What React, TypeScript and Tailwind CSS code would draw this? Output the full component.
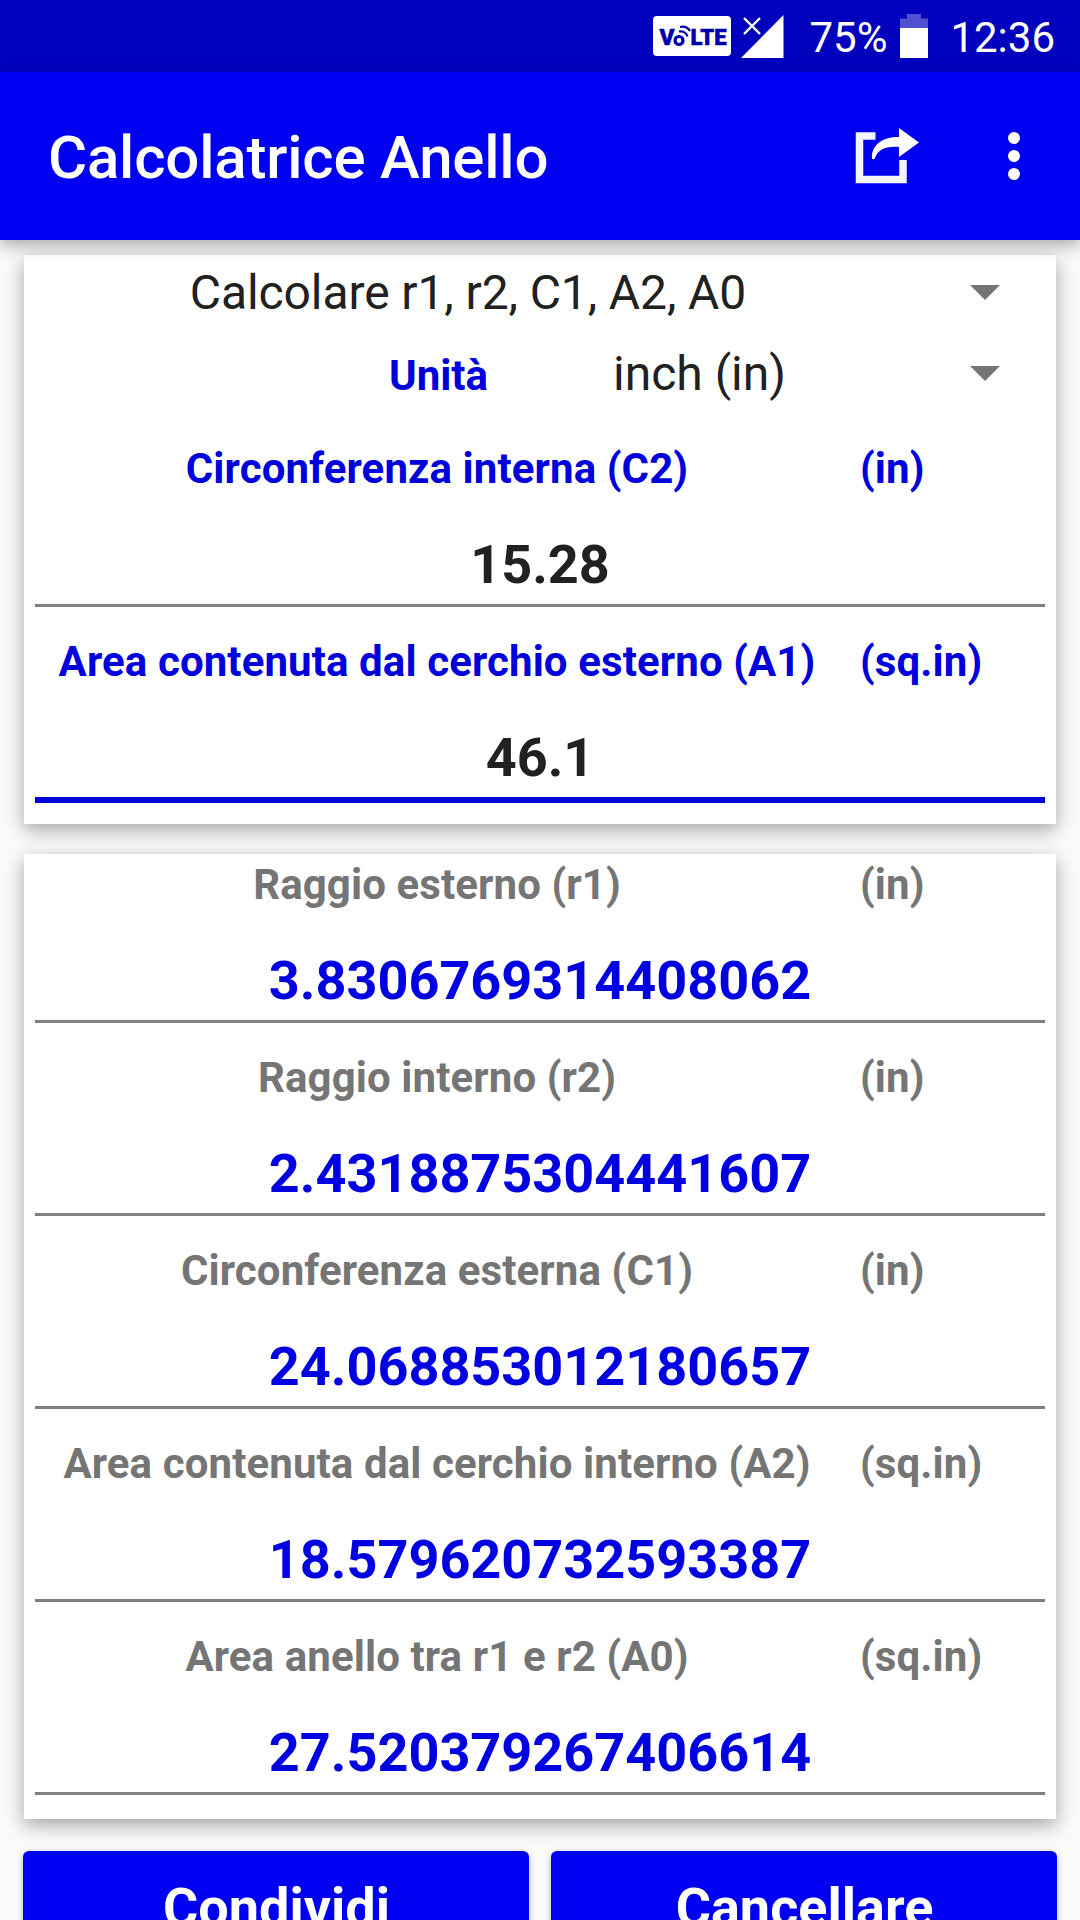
import { clsx } from "clsx";

type FieldProps = {
  label: string;
  unit: string;
  value: string;
  result?: boolean;
  focused?: boolean;
};

const inputs: FieldProps[] = [
  { label: "Circonferenza interna (C2)", unit: "(in)", value: "15.28" },
  { label: "Area contenuta dal cerchio esterno (A1)", unit: "(sq.in)", value: "46.1", focused: true },
];

const results: FieldProps[] = [
  { label: "Raggio esterno (r1)", unit: "(in)", value: "3.8306769314408062" },
  { label: "Raggio interno (r2)", unit: "(in)", value: "2.4318875304441607" },
  { label: "Circonferenza esterna (C1)", unit: "(in)", value: "24.068853012180657" },
  { label: "Area contenuta dal cerchio interno (A2)", unit: "(sq.in)", value: "18.579620732593387" },
  { label: "Area anello tra r1 e r2 (A0)", unit: "(sq.in)", value: "27.520379267406614" },
];

function VolteBadge() {
  return (
    <svg width="78" height="40" viewBox="0 0 78 40">
      <rect width="78" height="40" rx="4" fill="#fff" />
      <g fill="#0000a8" stroke="#0000a8" strokeWidth="0.5" fontFamily="Roboto, sans-serif" fontWeight="900">
        <text x="6.500" y="29" fontSize="22" textLength="15" lengthAdjust="spacingAndGlyphs">V</text>
        <text x="37.500" y="29" fontSize="22" textLength="36" lengthAdjust="spacingAndGlyphs">LTE</text>
      </g>
      <g fill="none" stroke="#0000a8">
        <circle cx="26" cy="24.500" r="4" strokeWidth="3.200" />
        <path d="M26 15.500C30 15 33.500 17 34.500 20.500" strokeWidth="2.200" />
        <path d="M27 11C31 10 35 11.500 37 15" strokeWidth="2.200" />
      </g>
    </svg>
  );
}

function SignalIcon() {
  return (
    <svg width="43" height="43" viewBox="0 0 43 43">
      <path d="M42.500 0V43H0Z" fill="#fff" />
      <path d="M0 0H21V21L12 30H0Z" fill="#0000bd" />
      <path d="M3 3L19 19M19 3L3 19" stroke="#fff" strokeWidth="2.400" />
    </svg>
  );
}

function BatteryIcon() {
  return (
    <svg width="28" height="44" viewBox="0 0 28 44">
      <path d="M7 0H21V4.500H28V14H0V4.500H7Z" fill="#5050d2" />
      <path d="M0 14H28V44H0Z" fill="#fff" />
    </svg>
  );
}

function ShareIcon() {
  return (
    <svg width="65" height="58" viewBox="0 0 65 58">
      <path d="M20.500 8H4.500V51.500H48V32" fill="none" stroke="#f4f4ff" strokeWidth="7.500" />
      <path d="M17 31C16 17 27 9 44 9V0L64 14.500L44 29V19C31 18 23 21 19.500 31Z" fill="#fff" />
    </svg>
  );
}

function Caret() {
  return (
    <svg width="30" height="15" viewBox="0 0 30 15" className="shrink-0">
      <path d="M0 0H30L15 15Z" fill="#757575" />
    </svg>
  );
}

function Field({ label, unit, value, result, focused }: FieldProps) {
  return (
    <div className="h-[193px] px-[11px] pt-px">
      <div
        className={clsx(
          "flex text-[42px] leading-[59px] font-bold tracking-[0.1px] whitespace-nowrap",
          result ? "text-[#757575]" : "text-[#0000dc]"
        )}
      >
        <span className="w-[804px] text-center">{label}</span>
        <span className="pl-[21px]">{unit}</span>
      </div>
      <div
        className={clsx(
          "mt-[27px] h-[79px] text-center text-[54px] leading-[79px] font-bold",
          result ? "text-[#0000e0]" : "text-[#212121]"
        )}
      >
        {value}
      </div>
      <div className={focused ? "h-[6px] bg-[#0000dc]" : "h-[3px] bg-[#808080]"} />
    </div>
  );
}

export default function App() {
  return (
    <div className="flex h-[1920px] w-[1080px] flex-col overflow-hidden bg-[#fafafa] font-['Roboto',sans-serif]">
      <div className="flex h-[72px] shrink-0 items-center justify-end bg-[#0000bd] pr-[25px] text-[42px] text-white">
        <VolteBadge />
        <span className="ml-[10px]"><SignalIcon /></span>
        <span className="ml-[25px] pt-[2px]">75%</span>
        <span className="ml-[13px]"><BatteryIcon /></span>
        <span className="ml-[22px] pt-[2px]">12:36</span>
      </div>

      <header className="z-10 flex h-[168px] shrink-0 items-center bg-[#0000f0] pl-[48px] text-white shadow-[0_6px_14px_rgba(0,0,0,0.3)]">
        <h1 className="flex-1 pt-[4px] text-[60px] font-medium tracking-[-0.2px]">Calcolatrice Anello</h1>
        <span className="pt-[2px]"><ShareIcon /></span>
        <svg width="12" height="48" viewBox="0 0 12 48" className="mr-[60px] ml-[88px]" fill="#fff">
          <circle cx="6" cy="6" r="6" />
          <circle cx="6" cy="24" r="6" />
          <circle cx="6" cy="42" r="6" />
        </svg>
      </header>

      <main className="flex flex-col px-[24px] pt-[15px]">
        <section className="h-[569px] bg-white shadow-[0_6px_18px_rgba(0,0,0,0.35)]">
          <div className="flex h-[75px] items-center pr-[56px] text-[48px] text-[#212121]">
            <span className="flex-1 pr-[58px] text-center tracking-[-0.1px]">Calcolare r1, r2, C1, A2, A0</span>
            <Caret />
          </div>
          <div className="flex h-[87px] items-center pr-[56px]">
            <span className="w-[589px] pt-[3px] pr-[125px] text-right text-[42px] font-bold text-[#0000dc]">Unità</span>
            <span className="flex-1 text-[48px] text-[#212121]">inch (in)</span>
            <Caret />
          </div>
          <div className="pt-[21px]">
            {inputs.map((f) => <Field key={f.label} {...f} />)}
          </div>
        </section>

        <section className="mt-[30px] h-[965px] bg-white shadow-[0_6px_18px_rgba(0,0,0,0.35)]">
          {results.map((f) => <Field key={f.label} {...f} result />)}
        </section>

        <div className="-mx-px mt-[32px] flex gap-[22px]">
          {["Condividi", "Cancellare"].map((text) => (
            <button
              key={text}
              className="h-[112px] flex-1 rounded-[6px] bg-[#0000f0] pl-px text-[54px] font-bold text-white shadow-[0_2px_6px_rgba(0,0,0,0.3)]"
            >
              {text}
            </button>
          ))}
        </div>
      </main>
    </div>
  );
}
